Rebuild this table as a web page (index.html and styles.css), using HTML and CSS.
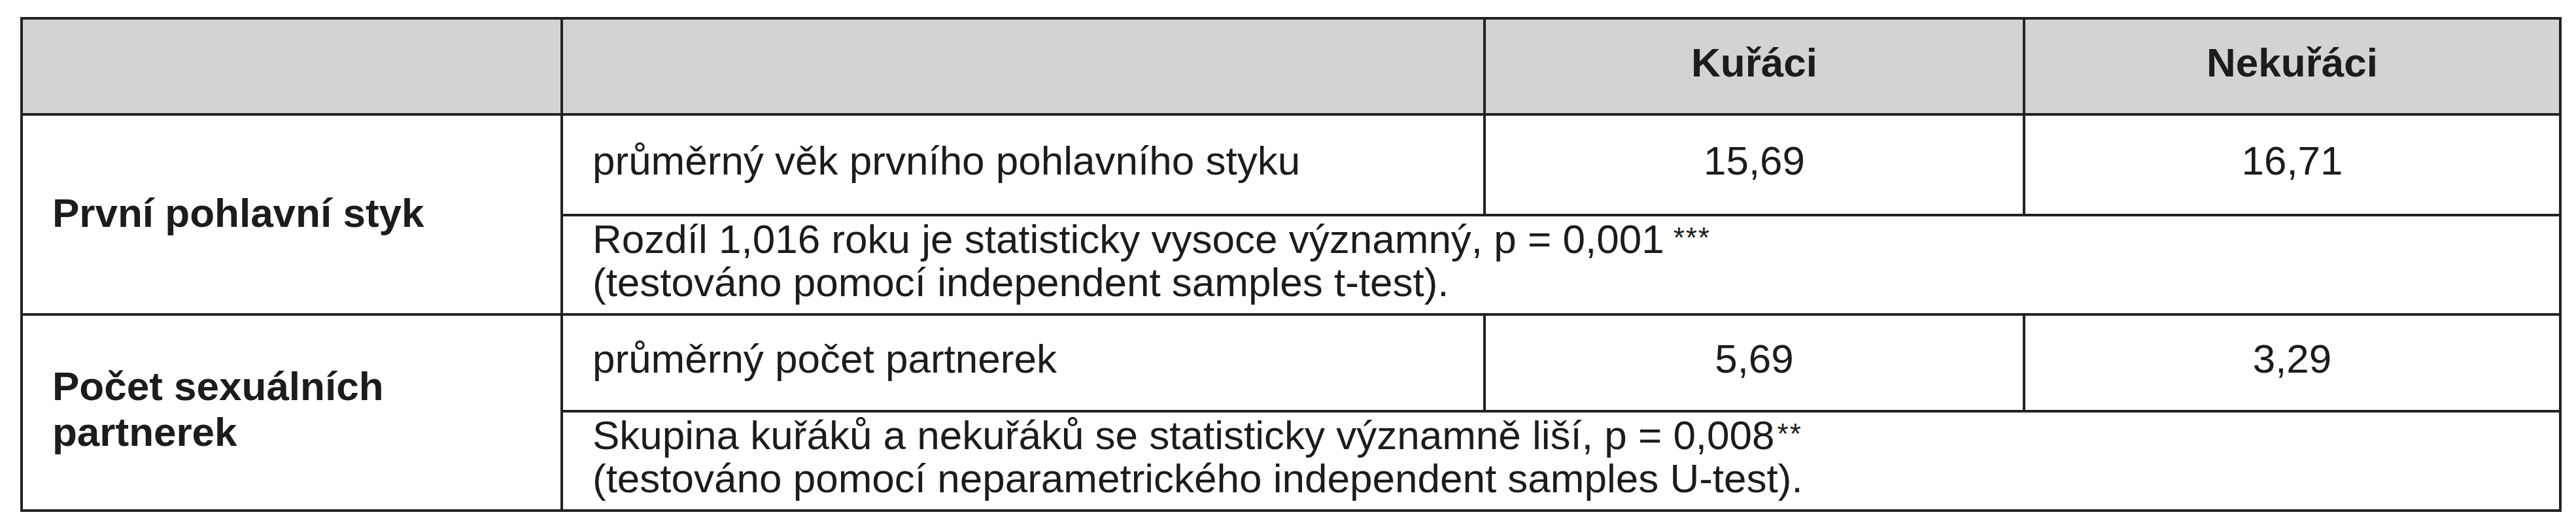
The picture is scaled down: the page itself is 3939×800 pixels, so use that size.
FILE: index.html
```html
<!DOCTYPE html>
<html lang="cs">
<head>
<meta charset="utf-8">
<title>Kuřáci a nekuřáci</title>
<link rel="stylesheet" href="styles.css">
</head>
<body>
<div class="sheet">
  <div class="cell head"></div>
  <div class="cell head"></div>
  <div class="cell head num"><p class="txt">Kuřáci</p></div>
  <div class="cell head num"><p class="txt">Nekuřáci</p></div>

  <div class="cell label label-one"><p class="txt">První pohlavní styk</p></div>
  <div class="cell"><p class="txt">průměrný věk prvního pohlavního styku</p></div>
  <div class="cell num"><p class="txt">15,69</p></div>
  <div class="cell num"><p class="txt">16,71</p></div>
  <div class="cell note"><p class="txt">Rozdíl 1,016 roku je statisticky vysoce významný, p = 0,001<span class="sig">***</span><br>(testováno pomocí independent samples t-test).</p></div>

  <div class="cell label label-two"><p class="txt">Počet sexuálních<br>partnerek</p></div>
  <div class="cell"><p class="txt">průměrný počet partnerek</p></div>
  <div class="cell num"><p class="txt">5,69</p></div>
  <div class="cell num"><p class="txt">3,29</p></div>
  <div class="cell note"><p class="txt">Skupina kuřáků a nekuřáků se statisticky významně liší, p = 0,008<span class="sig sig-two">**</span><br>(testováno pomocí neparametrického independent samples U-test).</p></div>
</div>
</body>
</html>
```

FILE: styles.css
```css
html, body {
  margin: 0;
  padding: 0;
  background: #ffffff;
}

body {
  font-family: "Liberation Sans", Arial, Helvetica, sans-serif;
  color: #1c1c1c;
  font-size: 62px;
  line-height: 66px;
}

.sheet {
  display: grid;
  grid-template-columns: 822px 1407px 821px 816px;
  grid-template-rows: 143px 150px 148px 144px 148px;
  gap: 4px;
  padding: 4px;
  width: max-content;
  margin: 26px 0 0 31px;
  background: #222222;
}

.cell {
  background: #ffffff;
  display: flex;
  align-items: center;
  padding: 0 20px 13px 45px;
  white-space: nowrap;
  min-width: 0;
  overflow: hidden;
}

.txt {
  margin: 0;
}

.head {
  background: #d2d3d5;
  font-weight: bold;
  padding-bottom: 12px;
}

.num {
  justify-content: center;
  padding-left: 0;
  padding-right: 0;
}

.label {
  font-weight: bold;
  grid-row: span 2;
}

.label-one {
  padding-bottom: 5px;
}

.label-two {
  line-height: 70px;
  padding-bottom: 11px;
}

.note {
  grid-column: 2 / 5;
}

.sig {
  font-size: 44px;
  line-height: 0;
  vertical-align: 8px;
  margin-left: 14px;
  letter-spacing: 2px;
}

.sig-two {
  margin-left: 4px;
}
```
